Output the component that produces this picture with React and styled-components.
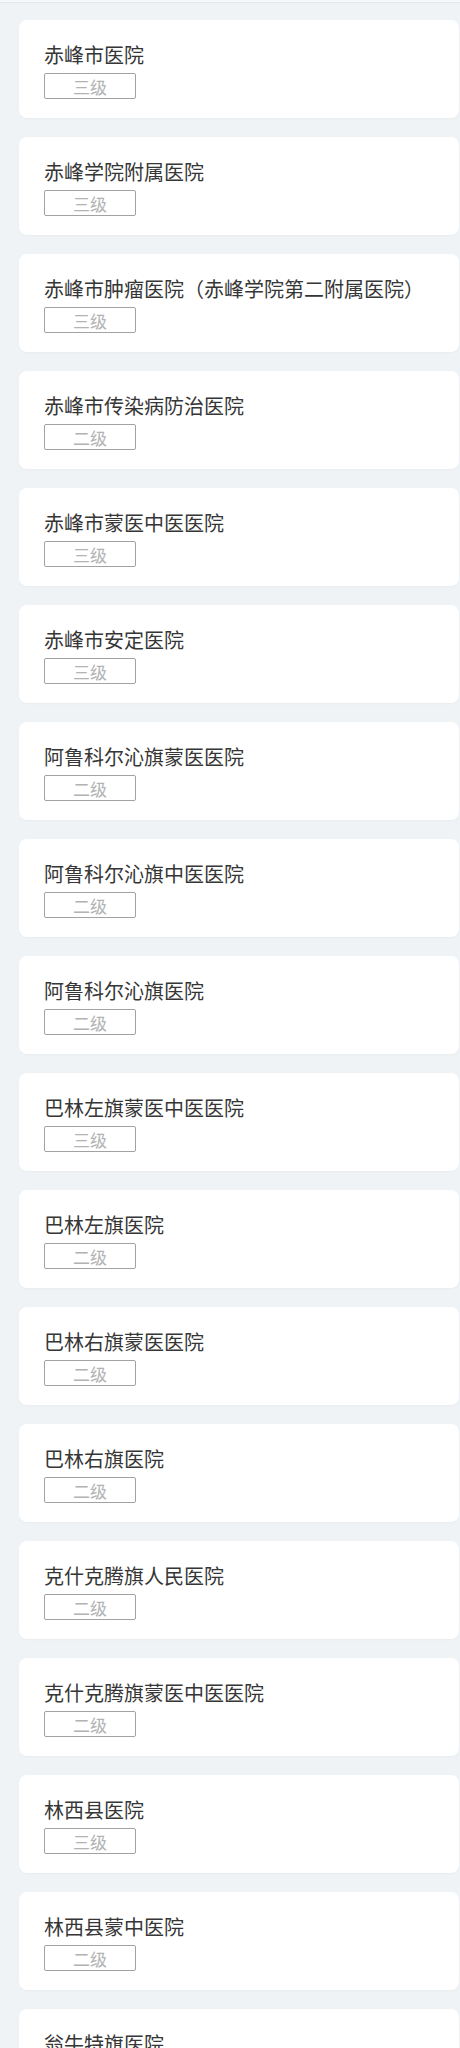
import React from 'react'
import styled, { createGlobalStyle } from 'styled-components'

const GlobalStyle = createGlobalStyle`
  body {
    margin: 0;
    background-color: #eff3f6;
    font-family: "Noto Sans CJK SC", "Noto Sans", sans-serif;
  }
`

const TopBar = styled.div`
  height: 2px;
  background-color: #f6f8fa;
  border-bottom: 1px solid #e3e8ec;
`

const List = styled.div`
  display: flex;
  flex-direction: column;
  gap: 19px;
  padding: 17px 1px 40px 19px;
`

const Card = styled.div`
  background-color: #ffffff;
  border-radius: 8px;
  padding: 21px 25px 19px 25px;
  box-shadow: 0 1px 2px rgba(0, 0, 0, 0.03);
`

const Name = styled.div`
  font-size: 20px;
  line-height: 28px;
  color: #363636;
  white-space: nowrap;
`

const Level = styled.div`
  margin-top: 4px;
  width: 92px;
  height: 26px;
  box-sizing: border-box;
  border: 1px solid #a2a2a2;
  border-radius: 2px;
  display: flex;
  align-items: center;
  justify-content: center;
  font-size: 17px;
  color: #b3b3b3;
`

const hospitals = [
  { name: '赤峰市医院', level: '三级' },
  { name: '赤峰学院附属医院', level: '三级' },
  { name: '赤峰市肿瘤医院（赤峰学院第二附属医院）', level: '三级' },
  { name: '赤峰市传染病防治医院', level: '二级' },
  { name: '赤峰市蒙医中医医院', level: '三级' },
  { name: '赤峰市安定医院', level: '三级' },
  { name: '阿鲁科尔沁旗蒙医医院', level: '二级' },
  { name: '阿鲁科尔沁旗中医医院', level: '二级' },
  { name: '阿鲁科尔沁旗医院', level: '二级' },
  { name: '巴林左旗蒙医中医医院', level: '三级' },
  { name: '巴林左旗医院', level: '二级' },
  { name: '巴林右旗蒙医医院', level: '二级' },
  { name: '巴林右旗医院', level: '二级' },
  { name: '克什克腾旗人民医院', level: '二级' },
  { name: '克什克腾旗蒙医中医医院', level: '二级' },
  { name: '林西县医院', level: '三级' },
  { name: '林西县蒙中医院', level: '二级' },
  { name: '翁牛特旗医院', level: '二级' },
  { name: '翁牛特旗蒙医中医医院', level: '二级' },
]

const App = () => {
  return (
    <>
      <GlobalStyle />
      <TopBar />
      <List>
        {hospitals.map((h) => (
          <Card key={h.name}>
            <Name>{h.name}</Name>
            <Level>{h.level}</Level>
          </Card>
        ))}
      </List>
    </>
  )
}

export default App
